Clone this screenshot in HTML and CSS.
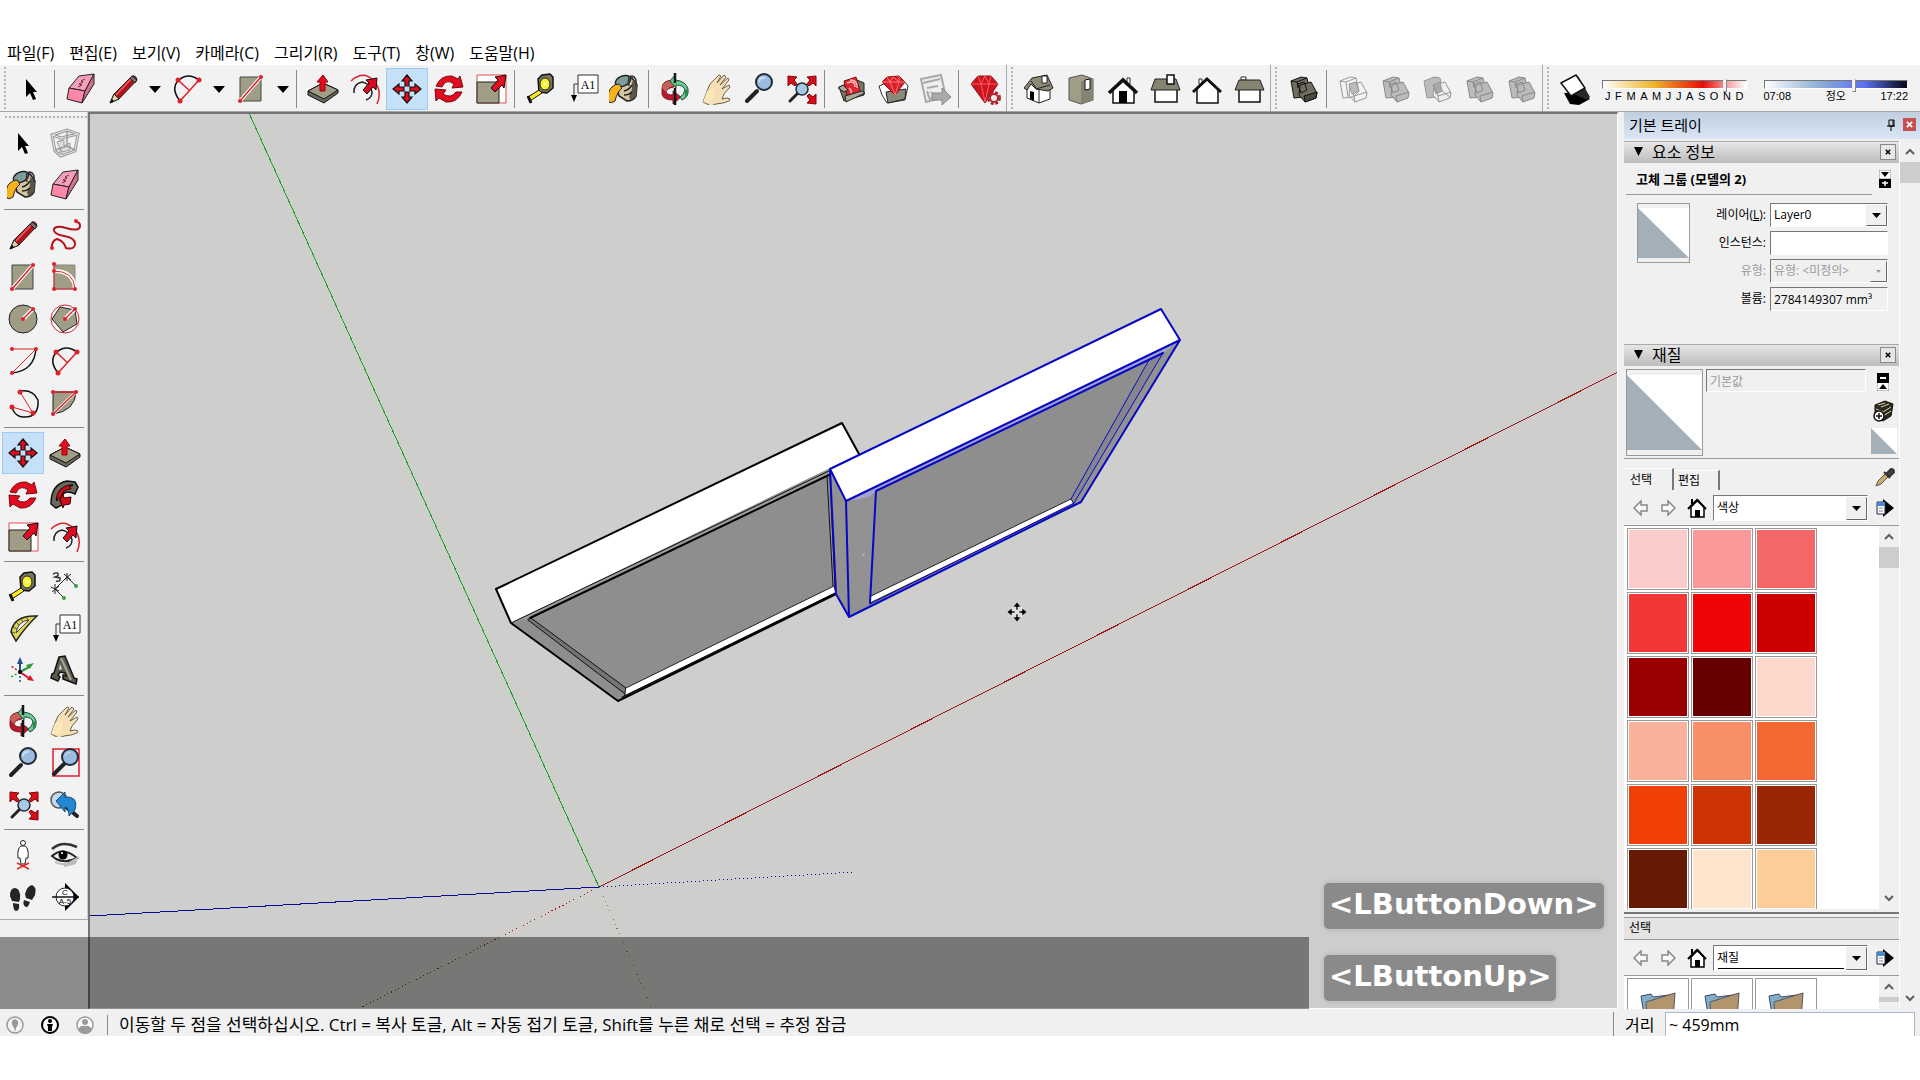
FILE: index.html
```html
<!DOCTYPE html>
<html lang="ko">
  <head>
    <meta charset="utf-8" />
    <meta name="viewport" content="width=device-width, initial-scale=1" />
    <title>SketchUp</title>
    <link rel="stylesheet" href="styles.css">
  </head>

  <body>
    <!-- icon set -->
    <svg class="defs" aria-hidden="true">
      <symbol id="select" viewBox="0 0 32 32"><path d="M11 6v18l4-4 3 7 3-1-3-7h4z"/></symbol>
      <symbol id="component" viewBox="0 0 32 32"><g fill="none" stroke="#999" stroke-width="3"><path d="M3 8l15-5 11 4-3 17-14 5L6 24z"/><path d="M3 8l9 3 17-4M12 11v18"/></g><g fill="none" stroke="#e8e8e8"><path d="M3 8l15-5 11 4-3 17-14 5L6 24z"/><path d="M3 8l9 3 17-4M12 11v18"/></g><path d="M8 15l7-2v6l6-3v7l-8 2z" fill="#ddd" stroke="#999"/><path d="M6 23l12-4 8 4M18 4v15" fill="none" stroke="#999" stroke-width="1.5"/></symbol>
      <symbol id="paint" viewBox="0 0 32 32"><path d="M7 11l3 12 8 5q6 0 9-5l1-11-5-7z" fill="#d3c7a2" stroke="#222" stroke-width="1.5"/><path d="M23 8l5 4-1 11-5 4-2-3 3-8z" fill="#5a564a"/><path d="M15 18q5-1 8-6M15 22q5 0 8-3" fill="none" stroke="#222" stroke-width="1.5"/><ellipse cx="14" cy="8" rx="8" ry="5" transform="rotate(-22 14 8)" fill="#7e9b9d" stroke="#222" stroke-width="1.5"/><path d="M-1 26q0-9 4-12 3-3 7-3l3 4q-5 4-7 13-4 3-6 1z" fill="#f6b21a" stroke="#222"/><path d="M20 13q-2-10 3-10 5 1 4 10" fill="none" stroke="#333" stroke-width="1.5"/></symbol>
      <symbol id="eraser" viewBox="0 0 32 32"><g stroke="#222" stroke-linejoin="round"><path d="M14 3l15-2-9 17-16-3z" fill="#f5a0bb"/><path d="M4 15l16 3-3 12-15-4z" fill="#ff87a7"/><path d="M29 1v10L17 30l3-12z" fill="#d5708f"/></g><path d="M13 14l4-2-3-1 4-2-2-1 4-2" fill="none" stroke="#733"/></symbol>
      <symbol id="pencil" viewBox="0 0 32 32"><path d="M3 30l4-9L25 3q4-1 5 4L12 26z" fill="#b5131c" stroke="#222"/><path d="M3 30l4-9 5 5z" fill="#dfd1ae" stroke="#222"/><path d="M3 30l2-4 2 2z"/><path d="M9 22L25 5" stroke="#e76461" stroke-width="1.5"/><path d="M23 5l5 5 2-3-5-4z" fill="#777" stroke="#222"/></symbol>
      <symbol id="freehand" viewBox="0 0 32 32"><path d="M3 30q-1-8 5-10 7 2 9 9 7 2 9-3 1-7-11-9-11-2-10-7 2-4 12-1 14 4 14-2 0-4-4-4" fill="none" stroke="#b5131c" stroke-width="2"/><g fill="#e11e2c"><circle cx="3" cy="29" r="2"/><circle cx="27" cy="2" r="2"/></g></symbol>
      <symbol id="rect" viewBox="0 0 32 32"><path d="M5 4h21v24H5z" fill="#a09d87" stroke="#444"/><path d="M5 28L26 4" stroke="#fff" stroke-width="3.5"/><path d="M5 28L26 4" stroke="#d9222c" stroke-width="1.5"/><g fill="#d9222c"><circle cx="5" cy="28" r="2"/><circle cx="26" cy="4" r="2"/></g></symbol>
      <symbol id="rotrect" viewBox="0 0 32 32"><path d="M5 4h21v24H5z" fill="#a09d87" stroke="#888"/><path d="M5 10q20 0 21 18" fill="none" stroke="#fff" stroke-width="4"/><path d="M5 3v25h21Q25 10 5 10" fill="none" stroke="#d9222c"/><g fill="#d9222c"><circle cx="5" cy="3" r="2"/><circle cx="5" cy="10" r="2"/><circle cx="5" cy="28" r="2"/><circle cx="26" cy="28" r="2"/></g></symbol>
      <symbol id="circle" viewBox="0 0 32 32"><circle cx="16" cy="16" r="14" fill="#a09d87" stroke="#222"/><path d="M16 16l10-10" stroke="#fff" stroke-width="4"/><path d="M16 16l10-10" stroke="#d9222c" stroke-width="1.5"/><g fill="#d9222c"><circle cx="16" cy="16" r="2"/><circle cx="26" cy="6" r="2"/></g></symbol>
      <symbol id="polygon" viewBox="0 0 32 32"><circle cx="16" cy="16" r="14" fill="#fff" stroke="#d9222c"/><path d="M3 16l8-12 15 3 2 14-14 8z" fill="#a09d87" stroke="#222"/><path d="M16 16l10-10" stroke="#fff" stroke-width="4"/><path d="M16 16l10-10" stroke="#d9222c" stroke-width="1.5"/><g fill="#d9222c"><circle cx="16" cy="16" r="2"/><circle cx="26" cy="6" r="2"/></g></symbol>
      <symbol id="arc" viewBox="0 0 32 32"><path d="M29 4Q27 26 5 28" fill="none" stroke="#111" stroke-width="1.5"/><path d="M5 4h24L5 28" fill="none" stroke="#d9222c"/><g fill="#d9222c"><circle cx="5" cy="4" r="2"/><circle cx="29" cy="4" r="2"/><circle cx="5" cy="28" r="2"/></g></symbol>
      <symbol id="arc2" viewBox="0 0 32 32"><path d="M9 28Q-1 15 8 7q9-8 20 0" fill="none" stroke="#111" stroke-width="1.5"/><path d="M9 28L28 7M7 7l12 11" stroke="#d9222c" stroke-width="1.5"/><g fill="#d9222c"><circle cx="9" cy="28" r="2.5"/><circle cx="28" cy="7" r="2.5"/><circle cx="7" cy="7" r="2.5"/></g></symbol>
      <symbol id="arc3" viewBox="0 0 32 32"><path d="M13 4q13-2 18 9 1 17-13 17-9 1-13-9" fill="none" stroke="#111" stroke-width="1.5"/><path d="M13 5l13 21L5 20" fill="none" stroke="#d9222c"/><g fill="#d9222c"><circle cx="13" cy="5" r="2.5"/><circle cx="26" cy="26" r="2.5"/><circle cx="5" cy="20" r="2.5"/></g></symbol>
      <symbol id="pie" viewBox="0 0 32 32"><path d="M4 5h23q-1 19-23 22z" fill="#a09d87" stroke="#222"/><path d="M4 27L27 5" stroke="#fff" stroke-width="3"/><path d="M4 5h23L4 27" fill="none" stroke="#d9222c" stroke-width="1.5"/><g fill="#d9222c"><circle cx="4" cy="5" r="2"/><circle cx="27" cy="5" r="2"/><circle cx="4" cy="27" r="2"/></g></symbol>
      <symbol id="move" viewBox="0 0 32 32"><path d="M16 2l5 6h-3v5h-4V8h-3zM16 30l5-6h-3v-5h-4v5h-3zM2 16l6-5v3h5v4H8v3zM30 16l-6-5v3h-5v4h5v3z" fill="#e30b20" stroke="#111" stroke-width="1.2"/></symbol>
      <symbol id="push" viewBox="0 0 32 32"><path d="M1 18l15-8 15 7v3L17 30 1 22z" fill="#68685d" stroke="#111"/><path d="M1 18l15-8 15 7-14 9z" fill="#a09d87" stroke="#111"/><path d="M16 2l5 7h-3v9h-5V9h-3z" fill="#e30b20" stroke="#900"/></symbol>
      <symbol id="rotate" viewBox="0 0 32 32"><g fill="#e30b20" stroke="#7a0710"><path d="M3 13Q8 2 19 3l6 3 2-3 3 11-11 1 2-4Q13 5 9 14z"/><path d="M29 19q-5 11-16 10l-7-4-3 3-1-12 11 1-3 4q8 5 13-2z"/></g></symbol>
      <symbol id="follow" viewBox="0 0 32 32"><path d="M2 25Q2 5 18 2l8 1 3 5-3 7q-12-6-15 6l2 5-6 3z" fill="#6b695e" stroke="#111" stroke-width="1.5"/><path d="M8 22Q8 8 24 6" fill="none" stroke="#111" stroke-width="2"/><path d="M7 20Q9 9 20 6l2 4q-9 0-10 8z" fill="#d50d1a" stroke="#400"/><path d="M11 20l3-5 1 4 7-1-1 7-6 1-1 3z" fill="#d50d1a" stroke="#400"/></symbol>
      <symbol id="scale" viewBox="0 0 32 32"><path d="M2 2h29v28H2z" fill="#fff" stroke="#df4c50"/><path d="M2 9h22v21H2z" fill="#a09d87" stroke="#222"/><path d="M31 2L20 4l3 3-7 8 4 4 7-7 2 3z" fill="#e30b20" stroke="#111"/></symbol>
      <symbol id="offset" viewBox="0 0 32 32"><path d="M2 8Q14-3 24 7t4 24" fill="none" stroke="#d9222c" stroke-width="1.5"/><path d="M5 20q-1-9 8-11 9 2 10 10 0 6-6 8" fill="none" stroke="#222" stroke-width="1.5"/><path d="M28 5L17 7l3 3-6 7 4 4 6-7 3 3z" fill="#d90b20" stroke="#111"/></symbol>
      <symbol id="tape" viewBox="0 0 32 32"><path d="M13 6l4-4 8-1 3 3v11l-6 5-8-1z" fill="#77745f" stroke="#111" stroke-width="1.5"/><ellipse cx="20" cy="11" rx="5" ry="6" fill="#f8f32a" stroke="#222"/><path d="M14 17L3 24l2 4 12-8z" fill="#f8e91c" stroke="#111"/><path d="M3 23l3 7" stroke="#111" stroke-width="3"/><circle cx="20" cy="11" r="2" fill="#fbf9a0"/></symbol>
      <symbol id="text" viewBox="0 0 32 32"><path d="M11 2h20v18H11z" fill="#fff" stroke="#333"/><path d="M11 11H7v13" fill="none" stroke="#333"/><path d="M4 22h6l-3 7z"/><text x="21" y="16" class="icon-text">A1</text></symbol>
      <symbol id="dimension" viewBox="0 0 32 32"><path d="M6 18L18 6l9 9M6 18l9 9" fill="none" stroke="#333"/><path d="M2 16l8 4M10 15l-7 6M6 13v10M15 3l7 6M22 3l-7 6M18 2v8" stroke="#222"/><circle cx="27" cy="15" r="2" fill="#39a047"/><circle cx="15" cy="27" r="2" fill="#39a047"/><path d="M4 3q6-3 5 2l-3 1 5 1q1 4-4 3" fill="none" stroke="#333" stroke-width="1.5"/></symbol>
      <symbol id="protractor" viewBox="0 0 32 32"><path d="M30 3Q7 2 4 19l5 9Q20 12 30 3z" fill="#ded451" stroke="#222" stroke-width="1.5"/><path d="M22 7Q11 8 9 20q6-6 13-13z" fill="#f1f1f1" stroke="#444"/><path d="M20 5l1 2M14 6l2 3M9 9l3 3M6 14l4 2M5 19l3 1" stroke="#555"/></symbol>
      <symbol id="axes" viewBox="0 0 32 32"><path d="M13 17V8" stroke="#204f9c" stroke-width="2"/><path d="M10 9l3-7 3 7z" fill="#204f9c"/><path d="M13 17l11-6" stroke="#2b9b3d" stroke-width="2"/><path d="M19 10l8-2-5 6z" fill="#2b9b3d"/><path d="M13 17l10 7" stroke="#d31320" stroke-width="2"/><path d="M20 25l7 1-4-6z" fill="#d31320"/><path d="M13 17v10" stroke="#204f9c" stroke-width="1.5" stroke-dasharray="2"/><path d="M13 17l-9 5" stroke="#2b9b3d" stroke-width="1.5" stroke-dasharray="2"/><path d="M13 17l-9-6" stroke="#d31320" stroke-width="1.5" stroke-dasharray="2"/><circle cx="13" cy="17" r="2"/></symbol>
      <symbol id="text3d" viewBox="0 0 32 32"><path d="M10 2l6-1 9 22 3 1-1 5-13-5v-4l3 1-1-3-5-1-2 3 2 2-2 4-7-3 1-4 2-1z" fill="#5d5b50" stroke="#111" stroke-width="1.5"/><path d="M11 9l2 5-3 1z" fill="#ddd"/><path d="M12 3l10 22" stroke="#aaa591" stroke-width="2"/></symbol>
      <symbol id="orbit" viewBox="0 0 32 32"><path d="M15 7Q3 7 3 15v6q1 6 11 6v4l8-7-8-6v4q-6 0-7-3 1-4 8-5z" fill="#bd1830" stroke="#511" stroke-width=".8"/><path d="M15 7Q3 8 3 15l4 4q1-5 8-6z" fill="#c8615a"/><path d="M16 7V2l-5 6 6 7v-3q8 0 9 5-1 5-5 7l2 3q7-3 6-11-2-8-13-9z" fill="#70c895" stroke="#164f30"/><path d="M26 17v8q4-2 3-9z" fill="#268a51"/><path d="M16 0v32" stroke="#151515" stroke-width="2.5" stroke-dasharray="10 5 20"/></symbol>
      <symbol id="hand" viewBox="0 0 32 32"><path d="M2 29l4-11 3-7 9-9 2 1-4 7 7-8 2 2-6 8 8-7 1 2-7 9 7-4 1 2-6 7-2 5 5-1 3 1-1 2-6 2-7 1-5 2z" fill="#f6dfb5" stroke="#473f31" stroke-width=".8"/><path d="M2 29l4-11 8-2-1 7-4 7z" fill="#fae8ba"/></symbol>
      <symbol id="zoom" viewBox="0 0 32 32"><path d="M14 18L4 28" stroke="#222" stroke-width="4" stroke-linecap="round"/><circle cx="21" cy="9" r="8" fill="#99bce0" stroke="#222a35" stroke-width="2"/><path d="M16 9q1-5 6-4" stroke="#c8e3f7" fill="none" stroke-width="2"/></symbol>
      <symbol id="zoomwin" viewBox="0 0 32 32"><path d="M4 2h26v27H4z" fill="none" stroke="#e11e2c" stroke-width="1.5"/><path d="M15 17L5 27" stroke="#222" stroke-width="4" stroke-linecap="round"/><circle cx="21" cy="10" r="8" fill="#99bce0" stroke="#222a35" stroke-width="2"/><path d="M16 9q1-4 6-4" stroke="#c8e3f7" fill="none"/></symbol>
      <symbol id="extents" viewBox="0 0 32 32"><path d="M13 20L5 28" stroke="#222" stroke-width="3" stroke-linecap="round"/><circle cx="17" cy="16" r="6" fill="#a6c8e4" stroke="#222a35" stroke-width="1.5"/><path d="M3 3l9 1-3 3 3 4-2 2-4-3-3 3zM31 3l-9 1 3 3-3 4 2 2 4-3 3 3zM31 31l-9-1 3-3-3-4 2-2 4 3 3-3z" fill="#d60f20" stroke="#800"/></symbol>
      <symbol id="previous" viewBox="0 0 32 32"><circle cx="10" cy="11" r="8" fill="#c5d9eb" stroke="#555" stroke-width="1.5"/><path d="M17 18l11 9" stroke="#222" stroke-width="4" stroke-linecap="round"/><path d="M7 12l9-9v5q14-1 10 13l-6 6q0-9-4-9v5z" fill="#2487d2" stroke="#135181"/></symbol>
      <symbol id="position" viewBox="0 0 32 32"><path d="M14 7q-4 2-3 12h2l1 6h4l1-6h2Q22 9 18 7z" fill="#fff" stroke="#222"/><circle cx="16" cy="4" r="2.5" fill="#fff" stroke="#222"/><path d="M10 24l12 6M22 24l-12 6" stroke="#e12628" stroke-width="1.5"/></symbol>
      <symbol id="look" viewBox="0 0 32 32"><path d="M3 10Q13 1 28 8" fill="none" stroke="#333" stroke-width="2.5"/><path d="M3 17q11-10 25 2-11 6-21 1z" fill="#eee" stroke="#222" stroke-width="2"/><circle cx="14" cy="16" r="4.5"/><circle cx="13" cy="14" r="1" fill="#fff"/><path d="M6 23q9 5 22-1M15 27l12-3M18 25l12-7" fill="none" stroke="#bbb" stroke-width="2"/></symbol>
      <symbol id="walk" viewBox="0 0 32 32"><path d="M3 15q0-8 5-8 6 1 5 11l-1 3-7-1zM6 22l6 1q1 7-3 7-3-1-3-8zM18 13q2-8 7-9 5 2 3 10l-3 5-6-2zM17 19l6 2q-2 6-4 5-4-2-2-7z" fill="#242424"/></symbol>
      <symbol id="section" viewBox="0 0 32 32"><path d="M16 2l14 14-14 14z"/><circle cx="16" cy="16" r="9" fill="#fff" stroke="#222"/><path d="M3 16h27" stroke="#111" stroke-width="1.5"/><text x="16" y="14" class="icon-small">C</text><text x="16" y="23" class="icon-small">A-5</text></symbol>
      <symbol id="get" viewBox="0 0 32 32"><path d="M4 14l5 14 20-6V10l-7-3-13 5z" fill="#77766a" stroke="#222"/><path d="M9 8l12-4 5 17-14 3z" fill="#dd2630" stroke="#711"/><path d="M12 10q8-3 8 4M14 15q3 2 2 5M15 7q8 0 7 8" fill="none" stroke="#fbb" stroke-width="1.5"/><path d="M3 15l6 4 4-2-5-5zM10 23l17-5 3 2-19 9z" fill="#aaa796" stroke="#222"/></symbol>
      <symbol id="share" viewBox="0 0 32 32"><path d="M2 13l7-3 17-3 5 6-3 14-18 3-5-8z" fill="#fff" stroke="#333"/><path d="M9 19l20-3-1 10-17 4z" fill="#8b897c" stroke="#222"/><path d="M5 9l5-5 12-1 6 6-10 13z" fill="#d8202c" stroke="#911"/><path d="M5 9h23M10 4l3 5 5 13 4-13V3M13 9l3-5 6 5" fill="none" stroke="#ff7774"/></symbol>
      <symbol id="send" viewBox="0 0 32 32"><path d="M2 6l20-4 5 22-20 5z" fill="#eee" stroke="#aaa" stroke-width="2"/><path d="M4 10l17-4M8 15l11-2M8 18l3 9" stroke="#aaa" stroke-width="2"/><circle cx="12" cy="22" r="3" fill="none" stroke="#aaa"/><path d="M13 20h10v-5l9 9-9 8v-5H13z" fill="#aaa" stroke="#888"/></symbol>
      <symbol id="gem" viewBox="0 0 32 32"><path d="M2 11l7-8h13l7 8-13 19z" fill="#cb1420" stroke="#8c1017"/><path d="M2 11h27M9 3l3 8 4 18 4-18 2-8M12 11l4-8 4 8" fill="none" stroke="#ff5b5c"/><circle cx="25" cy="25" r="5" fill="none" stroke="#a82128" stroke-width="4" stroke-dasharray="2.5 1.5"/><circle cx="25" cy="25" r="4" fill="#eee" stroke="#b82630" stroke-width="2"/></symbol>
      <symbol id="iso" viewBox="0 0 32 32"><path d="M4 15l8-9 15 7v13l-11 4-12-5z" fill="#fff" stroke="#222"/><path d="M16 16v14" stroke="#222"/><path d="M1 15L9 5l15-3 6 13-5 3-12-2-5-5-4 6z" fill="#8c8977" stroke="#222"/><path d="M13 15L8 8M13 16l14-4" stroke="#222"/><path d="M19 3h5v7h-5z" fill="#fff" stroke="#222"/><path d="M7 18l4 1v9l-4-2z"/></symbol>
      <symbol id="top" viewBox="0 0 32 32"><path d="M4 5l13-3 11 4v21l-12 4-12-4z" fill="#a09d87" stroke="#555"/><path d="M16 8v23l12-4V6z" fill="#858371"/><path d="M20 7l5-1v10l-5 1z" fill="#fff" stroke="#111"/></symbol>
      <symbol id="front" viewBox="0 0 32 32"><path d="M6 16v14h21V16L16 7z" fill="#fff" stroke="#111" stroke-width="1.5"/><path d="M20 5h3v6h-3z" fill="#fff" stroke="#333"/><path d="M2 20L16 7l14 13" fill="none" stroke="#111" stroke-width="3.5"/><path d="M12 18h8v12h-8z"/></symbol>
      <symbol id="right" viewBox="0 0 32 32"><path d="M6 16h22v13H6z" fill="#fff" stroke="#111" stroke-width="1.5"/><path d="M6 6h21l4 11H2z" fill="#858371" stroke="#222"/><path d="M18 2h7v9h-7z" fill="#fff" stroke="#111" stroke-width="1.5"/></symbol>
      <symbol id="back" viewBox="0 0 32 32"><path d="M6 16v14h21V16L16 6z" fill="#fff" stroke="#111" stroke-width="1.5"/><path d="M8 6h3v5H8z" fill="#fff" stroke="#333"/><path d="M2 19L16 6l14 13" fill="none" stroke="#111" stroke-width="3"/></symbol>
      <symbol id="left" viewBox="0 0 32 32"><path d="M8 4h5v3H8z" fill="#fff" stroke="#333"/><path d="M6 16h21v13H6z" fill="#fff" stroke="#111" stroke-width="1.5"/><path d="M6 7h21l4 10H2z" fill="#858371" stroke="#222"/></symbol>
      <symbol id="solid" viewBox="0 0 32 32"><g stroke="#111" stroke-linejoin="round"><path d="M4 8l10-4 6 1 3 13-6 6-10 1z" fill="#716e61"/><path d="M13 12l11-3 6 11-1 5-11 4-6-7z" fill="#716e61"/><path d="M18 29l-1-6 13-4-1 6z" fill="#4b4940"/><path d="M4 8l6 1 10-4M10 9l1 6M11 11l6-2 3 8-6 3z" fill="none"/></g></symbol>
      <symbol id="solid-grey" viewBox="0 0 32 32"><g stroke="#888" stroke-linejoin="round"><path d="M4 8l10-4 6 1 3 13-6 6-10 1z" fill="#bbb"/><path d="M13 12l11-3 6 11-1 5-11 4-6-7z" fill="#bbb"/><path d="M18 29l-1-6 13-4M4 8l6 1 10-4M10 9l1 6M11 11l6-2 3 8-6 3z" fill="none"/></g></symbol>
      <symbol id="intersect" viewBox="0 0 32 32"><g fill="none" stroke="#999"><path d="M3 8l10-4 6 1 3 13-6 6-10 1zM13 12l11-3 6 11-1 5-11 4-6-7z"/><path d="M3 8l6 1 10-4M9 9l2 15M18 29l-1-6 13-4M13 12l4 11"/><path d="M12 11l7-2 3 9-7 3z" fill="#bbb"/></g></symbol>
      <symbol id="subtract" viewBox="0 0 32 32"><g stroke="#999"><path d="M3 8l10-4 6 1 3 13-6 6-10 1z" fill="#bbb"/><path d="M13 12l11-3 6 11-1 5-11 4-6-7z" fill="#eee"/><path d="M12 12l7-3 2 9-6 3z" fill="#aaa"/><path d="M18 29l-1-6 13-4M13 12l4 11M21 18l8 6" fill="none"/></g></symbol>
      <symbol id="shadow" viewBox="0 0 32 32"><path d="M5 20L20 19l11 7-11 6-9-1z"/><path d="M3 10L19 3l12 21-3 3-15-7z" fill="#292929"/><path d="M2 10L17 2l9 13-14 8z" fill="#fff" stroke="#111" stroke-width="1.5"/></symbol>
      <symbol id="home" viewBox="0 0 20 20"><path d="M4 9v10h13V9l-6-7z" fill="#fff" stroke="#000" stroke-width="1.5"/><path d="M1 11l9-9 9 9M5 6V1" fill="none" stroke="#000" stroke-width="2"/><path d="M8 12h5v7H8z"/></symbol>
      <symbol id="details" viewBox="0 0 18 18"><path d="M7 4V0l11 9-11 9v-4z"/><path d="M1 3h8v12H1z" fill="#fff" stroke="#224"/><path d="M1 3h8v4H1z" fill="#4788c8"/><path d="M3 9h4M3 12h4" stroke="#789"/></symbol>
      <symbol id="arrow" viewBox="0 0 16 16"><path d="M1 8l7-7v4h6v6H8v4z" fill="#f8f8f8" stroke="#888" stroke-width="1.5"/></symbol>
      <symbol id="down" viewBox="0 0 12 8" preserveAspectRatio="none"><path d="M0 0h12L6 8z" fill="currentColor"/></symbol>
      <symbol id="chev" viewBox="0 0 12 8"><path d="M2 6l4-4 4 4" fill="none" stroke="#606060" stroke-width="2"/></symbol>
      <symbol id="close" viewBox="0 0 8 8"><path d="M1 1l6 6M7 1L1 7" stroke="currentColor" stroke-width="2"/></symbol>
      <symbol id="default" viewBox="0 0 50 50" preserveAspectRatio="none"><path d="M0 0h50v50H0z" fill="#fff"/><path d="M0 0l50 50H0z" fill="#a4b0b9"/></symbol>
      <symbol id="folder" viewBox="0 0 38 30"><path d="M2 5l10-2 2 3 16-2-2 26H6z" fill="#81aecb" stroke="#446"/><path d="M7 11l29-9-2 28H8z" fill="#b2956e" stroke="#555"/></symbol>
    </svg>

    <nav class="menu">
      <button>파일(F)</button>
      <button>편집(E)</button>
      <button>보기(V)</button>
      <button>카메라(C)</button>
      <button>그리기(R)</button>
      <button>도구(T)</button>
      <button>창(W)</button>
      <button>도움말(H)</button>
    </nav>

    <header class="toolbar">
      <div class="group">
        <button class="tool" aria-label="선택"><svg><use href="#select"/></svg></button>
        <i class="sep"></i>
        <button class="tool" aria-label="지우개"><svg><use href="#eraser"/></svg></button>
        <button class="tool" aria-label="선"><svg><use href="#pencil"/></svg></button>
        <button class="drop" aria-label="선 도구"><svg><use href="#down"/></svg></button>
        <button class="tool" aria-label="호"><svg><use href="#arc2"/></svg></button>
        <button class="drop" aria-label="호 도구"><svg><use href="#down"/></svg></button>
        <button class="tool" aria-label="직사각형"><svg><use href="#rect"/></svg></button>
        <button class="drop" aria-label="도형 도구"><svg><use href="#down"/></svg></button>
        <i class="sep"></i>
        <button class="tool" aria-label="밀기/당기기"><svg><use href="#push"/></svg></button>
        <button class="tool" aria-label="오프셋"><svg><use href="#offset"/></svg></button>
        <button class="tool active" aria-label="이동"><svg><use href="#move"/></svg></button>
        <button class="tool" aria-label="회전"><svg><use href="#rotate"/></svg></button>
        <button class="tool" aria-label="배율"><svg><use href="#scale"/></svg></button>
        <i class="sep"></i>
        <button class="tool" aria-label="줄자"><svg><use href="#tape"/></svg></button>
        <button class="tool" aria-label="텍스트"><svg><use href="#text"/></svg></button>
        <button class="tool" aria-label="페인트통"><svg><use href="#paint"/></svg></button>
        <i class="sep"></i>
        <button class="tool" aria-label="궤도"><svg><use href="#orbit"/></svg></button>
        <button class="tool" aria-label="이동 보기"><svg><use href="#hand"/></svg></button>
        <button class="tool" aria-label="확대/축소"><svg><use href="#zoom"/></svg></button>
        <button class="tool" aria-label="범위 확대"><svg><use href="#extents"/></svg></button>
        <i class="sep"></i>
        <button class="tool" aria-label="모델 가져오기"><svg><use href="#get"/></svg></button>
        <button class="tool" aria-label="모델 공유"><svg><use href="#share"/></svg></button>
        <button class="tool" aria-label="보내기"><svg><use href="#send"/></svg></button>
        <i class="sep"></i>
        <button class="tool" aria-label="확장 프로그램"><svg><use href="#gem"/></svg></button>
      </div>
      <div class="group">
        <button class="tool" aria-label="등각투영"><svg><use href="#iso"/></svg></button>
        <button class="tool" aria-label="맨 위"><svg><use href="#top"/></svg></button>
        <button class="tool" aria-label="전면"><svg><use href="#front"/></svg></button>
        <button class="tool" aria-label="오른쪽"><svg><use href="#right"/></svg></button>
        <button class="tool" aria-label="후면"><svg><use href="#back"/></svg></button>
        <button class="tool" aria-label="왼쪽"><svg><use href="#left"/></svg></button>
      </div>
      <div class="group">
        <button class="tool" aria-label="외부 쉘"><svg><use href="#solid"/></svg></button>
        <i class="sep"></i>
        <button class="tool" aria-label="교차" disabled><svg><use href="#intersect"/></svg></button>
        <button class="tool" aria-label="결합" disabled><svg><use href="#solid-grey"/></svg></button>
        <button class="tool" aria-label="빼기" disabled><svg><use href="#subtract"/></svg></button>
        <button class="tool" aria-label="트림" disabled><svg><use href="#solid-grey"/></svg></button>
        <button class="tool" aria-label="분할" disabled><svg><use href="#solid-grey"/></svg></button>
      </div>
      <div class="group shadows">
        <button class="tool" aria-label="그림자"><svg><use href="#shadow"/></svg></button>
        <div class="slider">
          <input type="range" class="date" aria-label="날짜" min="0" max="100" value="87">
          <div class="ticks"><span>J</span><span>F</span><span>M</span><span>A</span><span>M</span><span>J</span><span>J</span><span>A</span><span>S</span><span>O</span><span>N</span><span>D</span></div>
        </div>
        <div class="slider">
          <input type="range" class="time" aria-label="시간" min="0" max="100" value="63">
          <div class="ticks hours"><span>07:08</span><span>정오</span><span>17:22</span></div>
        </div>
      </div>
    </header>

    <main>
      <aside class="tools">
        <div class="tools-grid">
          <button class="tool" aria-label="선택"><svg><use href="#select"/></svg></button>
          <button class="tool" aria-label="구성요소 만들기"><svg><use href="#component"/></svg></button>
          <button class="tool" aria-label="페인트통"><svg><use href="#paint"/></svg></button>
          <button class="tool" aria-label="지우개"><svg><use href="#eraser"/></svg></button>
          <hr>
          <button class="tool" aria-label="선"><svg><use href="#pencil"/></svg></button>
          <button class="tool" aria-label="프리핸드"><svg><use href="#freehand"/></svg></button>
          <button class="tool" aria-label="직사각형"><svg><use href="#rect"/></svg></button>
          <button class="tool" aria-label="회전 직사각형"><svg><use href="#rotrect"/></svg></button>
          <button class="tool" aria-label="원"><svg><use href="#circle"/></svg></button>
          <button class="tool" aria-label="다각형"><svg><use href="#polygon"/></svg></button>
          <button class="tool" aria-label="호"><svg><use href="#arc"/></svg></button>
          <button class="tool" aria-label="2점 호"><svg><use href="#arc2"/></svg></button>
          <button class="tool" aria-label="3점 호"><svg><use href="#arc3"/></svg></button>
          <button class="tool" aria-label="파이"><svg><use href="#pie"/></svg></button>
          <hr>
          <button class="tool active" aria-label="이동"><svg><use href="#move"/></svg></button>
          <button class="tool" aria-label="밀기/당기기"><svg><use href="#push"/></svg></button>
          <button class="tool" aria-label="회전"><svg><use href="#rotate"/></svg></button>
          <button class="tool" aria-label="따라가기"><svg><use href="#follow"/></svg></button>
          <button class="tool" aria-label="배율"><svg><use href="#scale"/></svg></button>
          <button class="tool" aria-label="오프셋"><svg><use href="#offset"/></svg></button>
          <hr>
          <button class="tool" aria-label="줄자"><svg><use href="#tape"/></svg></button>
          <button class="tool" aria-label="치수"><svg><use href="#dimension"/></svg></button>
          <button class="tool" aria-label="각도기"><svg><use href="#protractor"/></svg></button>
          <button class="tool" aria-label="텍스트"><svg><use href="#text"/></svg></button>
          <button class="tool" aria-label="축"><svg><use href="#axes"/></svg></button>
          <button class="tool" aria-label="3D 텍스트"><svg><use href="#text3d"/></svg></button>
          <hr>
          <button class="tool" aria-label="궤도"><svg><use href="#orbit"/></svg></button>
          <button class="tool" aria-label="이동 보기"><svg><use href="#hand"/></svg></button>
          <button class="tool" aria-label="확대/축소"><svg><use href="#zoom"/></svg></button>
          <button class="tool" aria-label="창 확대"><svg><use href="#zoomwin"/></svg></button>
          <button class="tool" aria-label="범위 확대"><svg><use href="#extents"/></svg></button>
          <button class="tool" aria-label="이전"><svg><use href="#previous"/></svg></button>
          <hr>
          <button class="tool" aria-label="카메라 배치"><svg><use href="#position"/></svg></button>
          <button class="tool" aria-label="둘러보기"><svg><use href="#look"/></svg></button>
          <button class="tool" aria-label="워크"><svg><use href="#walk"/></svg></button>
          <button class="tool" aria-label="단면"><svg><use href="#section"/></svg></button>
        </div>
      </aside>

      <section class="viewport">
        <svg class="scene" viewBox="90 114 1527 894" preserveAspectRatio="xMinYMin slice">
          <!-- axes -->
          <g fill="none" shape-rendering="crispEdges">
            <path d="M249 113L599 887" stroke="#1f9f24"/>
            <path d="M599 887L652 1009" stroke="#4b9c4b" stroke-dasharray="1 4"/>
            <path d="M599 887L1618 372" stroke="#9c1418"/>
            <path d="M599 887L358 1009" stroke="#9c1418" stroke-dasharray="1 3"/>
            <path d="M599 887L90 916" stroke="#0a0a96"/>
            <path d="M599 887L855 872" stroke="#0a0a96" stroke-dasharray="1 3"/>
          </g>
          <!-- left cabinet -->
          <g stroke-linejoin="round" stroke-linecap="round">
            <path d="M496 589L842 423l17 31-29 16 6 124-218 107-107-78z" fill="#8e8e8e"/>
            <path d="M496 589L842 423l17 31-348 169z" fill="#fff"/>
            <path d="M511 623L830 470v5L530 618z" fill="#9c9c9c"/>
            <path d="M531 618l95 70-1 6-97-74z" fill="#747474" stroke="#111"/>
            <path d="M626 688l208-102 2 7-211 103z" fill="#fff" stroke="#222"/>
            <path d="M511 623L831 470M827 476l6 110M830 476l5 110" fill="none" stroke="#111"/>
            <path d="M530 618L831 474M859 454l-17-31L496 589l15 34 107 78 218-107" fill="none" stroke="#000" stroke-width="2"/>
            <path d="M622 697l213-104" stroke="#000"/>
          </g>
          <!-- selected cabinet -->
          <g stroke-linejoin="round" stroke-linecap="round">
            <path d="M830 469l16 32 334-161-99 162-232 115-13-23z" fill="#929292"/>
            <path d="M830 469l331-160 19 31-334 161z" fill="#fff"/>
            <path d="M849 501l331-160-17 12-287 138-7 6z" fill="#a3a3d0"/>
            <path d="M876 491l287-138-14 8-78 138-200 97z" fill="#8e8e8e"/>
            <path d="M1149 361l14-9-89 151-3-4z" fill="#85858f"/>
            <path d="M871 596l200-97 3 5-204 99z" fill="#fff" stroke="#222"/>
            <g fill="none" stroke="#0808c4">
              <path d="M1149 360l-78 139M1163 353l-89 150"/>
              <path d="M830 469l331-160 19 31-99 162-232 115-13-23zM846 501l334-161M846 501l3 116M830 469l16 32" stroke-width="2"/>
              <path d="M876 491l-6 112M876 491l287-138" stroke-width="2"/>
              <path d="M870 604l204-101"/>
            </g>
            <path d="M863 555h1" stroke="#ddd"/>
          </g>
          <!-- move cursor -->
          <g transform="translate(1017 612)">
            <circle r="7" fill="#ddd"/>
            <path d="M0-10l4 5H1v3h-2v-3h-3zM0 10l4-5H1V2h-2v3h-3zM-10 0l5-4v3h3v2h-3v3zM10 0L5-4v3H2v2h3v3z" stroke="#eee" stroke-width=".6"/>
          </g>
        </svg>
        <div class="keys">
          <kbd>&lt;LButtonDown&gt;</kbd>
          <kbd>&lt;LButtonUp&gt;</kbd>
        </div>
      </section>

      <aside class="tray">
        <div class="tray-title">
          <span>기본 트레이</span>
          <button class="pin" aria-label="고정"><svg viewBox="0 0 10 12"><path d="M3 1h5v6H3zM1 7h8M5 7v5M7 1v6" fill="none" stroke="#000"/></svg></button>
          <button class="tray-close" aria-label="닫기"><svg><use href="#close"/></svg></button>
        </div>
        <div class="tray-body">
          <div class="panels">
            <h2><svg><use href="#down"/></svg>요소 정보<button aria-label="요소 정보 닫기"><svg><use href="#close"/></svg></button></h2>
            <div class="entity">
              <div class="entity-head">
                <strong>고체 그룹 (모델의 2)</strong>
                <button class="toggle" aria-label="세부 정보"><svg viewBox="0 0 12 18"><path d="M0 0h12v9H0z" fill="#fff" stroke="#888"/><path d="M2 2h8L6 7zM0 9h12v9H0z"/><path d="M6 11v5M3 13h6" stroke="#fff" stroke-width="1.5"/></svg></button>
              </div>
              <div class="entity-body">
                <div class="thumb"><svg><use href="#default"/></svg></div>
                <form class="fields">
                  <label for="layer">레이어(<u>L</u>):</label>
                  <span class="combo"><select id="layer"><option>Layer0</option></select><i><svg><use href="#down"/></svg></i></span>
                  <label for="instance">인스턴스:</label>
                  <input id="instance" value="">
                  <label for="type" class="off">유형:</label>
                  <span class="combo off"><select id="type" disabled><option>유형: &lt;미정의&gt;</option></select><i><svg><use href="#down"/></svg></i></span>
                  <label for="volume">볼륨:</label>
                  <input id="volume" value="2784149307 mm³" readonly>
                </form>
              </div>
            </div>

            <h2><svg><use href="#down"/></svg>재질<button aria-label="재질 닫기"><svg><use href="#close"/></svg></button></h2>
            <div class="material">
              <div class="thumb big"><svg><use href="#default"/></svg></div>
              <input aria-label="재질 이름" value="기본값" disabled>
              <div class="material-side">
                <button class="toggle" aria-label="보조 창"><svg viewBox="0 0 12 18"><path d="M0 9h12v9H0z" fill="#fff" stroke="#888"/><path d="M2 16h8l-4-5zM0 0h12v10H0z"/><path d="M3 5h6" stroke="#fff" stroke-width="2"/></svg></button>
                <button class="create" aria-label="재질 만들기"><svg viewBox="0 0 22 22"><path d="M3 5l10-4 8 3-2 12-8 5-8-5z" fill="#2c2a20" stroke="#111"/><path d="M6 5l7-2M9 7l8-3M4 9l7 3 8-5M4 13l7 3 8-5" stroke="#ddd2aa" fill="none"/><circle cx="7" cy="16" r="5" fill="#fff" stroke="#111" stroke-width="1.5"/><path d="M7 13v6M4 16h6" stroke="#111" stroke-width="1.5"/></svg></button>
                <button class="reset" aria-label="기본 재질"><svg><use href="#default"/></svg></button>
              </div>
            </div>
            <div class="tabs">
              <button class="current">선택</button>
              <button>편집</button>
              <button class="dropper" aria-label="샘플 페인트"><svg viewBox="0 0 20 20"><path d="M1 19l2-5 8-8 3 3-8 8z" fill="#d1aa68" stroke="#555"/><path d="M9 5l6 6M11 7l5-5q3 0 3 3l-5 5z" fill="#444" stroke="#333" stroke-width="2"/></svg></button>
            </div>
            <div class="nav">
              <button aria-label="뒤로"><svg><use href="#arrow"/></svg></button>
              <button aria-label="앞으로" class="flip"><svg><use href="#arrow"/></svg></button>
              <button aria-label="모델 안" class="home"><svg><use href="#home"/></svg></button>
              <span class="combo"><select aria-label="재질 모음"><option>색상</option></select><i><svg><use href="#down"/></svg></i></span>
              <button aria-label="세부 정보" class="details"><svg><use href="#details"/></svg></button>
            </div>
            <div class="list colors">
              <div class="swatches">
                <button aria-label="색상 1"></button><button aria-label="색상 2"></button><button aria-label="색상 3"></button>
                <button aria-label="색상 4"></button><button aria-label="색상 5"></button><button aria-label="색상 6"></button>
                <button aria-label="색상 7"></button><button aria-label="색상 8"></button><button aria-label="색상 9"></button>
                <button aria-label="색상 10"></button><button aria-label="색상 11"></button><button aria-label="색상 12"></button>
                <button aria-label="색상 13"></button><button aria-label="색상 14"></button><button aria-label="색상 15"></button>
                <button aria-label="색상 16"></button><button aria-label="색상 17"></button><button aria-label="색상 18"></button>
              </div>
              <div class="scroll"><svg><use href="#chev"/></svg><i></i><svg class="last"><use href="#chev"/></svg></div>
            </div>
            <div class="split"></div>
            <div class="second-title">선택</div>
            <div class="nav">
              <button aria-label="뒤로"><svg><use href="#arrow"/></svg></button>
              <button aria-label="앞으로" class="flip"><svg><use href="#arrow"/></svg></button>
              <button aria-label="모델 안" class="home"><svg><use href="#home"/></svg></button>
              <span class="combo lined"><select aria-label="보조 재질 모음"><option>재질</option></select><i><svg><use href="#down"/></svg></i></span>
              <button aria-label="세부 정보" class="details"><svg><use href="#details"/></svg></button>
            </div>
            <div class="list folders">
              <div class="swatches">
                <button aria-label="폴더 1"><svg><use href="#folder"/></svg></button>
                <button aria-label="폴더 2"><svg><use href="#folder"/></svg></button>
                <button aria-label="폴더 3"><svg><use href="#folder"/></svg></button>
              </div>
              <div class="scroll"><svg><use href="#chev"/></svg><i></i></div>
            </div>
          </div>
          <div class="scroll outer"><svg><use href="#chev"/></svg><i></i><svg class="last"><use href="#chev"/></svg></div>
        </div>
      </aside>
      <div class="shade"></div>
    </main>

    <footer>
      <svg viewBox="0 0 20 20"><circle cx="10" cy="10" r="8" fill="#f4f4f4" stroke="#999" stroke-width="1.5"/><path d="M10 4q6 2 1 9l-1 4-1-4Q4 6 10 4z" fill="#999"/></svg>
      <svg viewBox="0 0 20 20"><circle cx="10" cy="10" r="8" fill="#fff" stroke="#000" stroke-width="2"/><circle cx="10" cy="6" r="2"/><path d="M7 9h6l-1 3v4H8v-4z"/></svg>
      <svg viewBox="0 0 20 20"><circle cx="10" cy="10" r="8" fill="#fff" stroke="#999" stroke-width="1.5"/><circle cx="10" cy="7" r="3" fill="#999"/><path d="M3 15q2-5 7-4 5-1 7 4-3 4-7 4t-7-4z" fill="#999"/></svg>
      <p>이동할 두 점을 선택하십시오. Ctrl = 복사 토글, Alt = 자동 접기 토글, Shift를 누른 채로 선택 = 추정 잠금</p>
      <div class="measure">
        <label for="distance">거리</label>
        <input id="distance" value="~ 459mm">
      </div>
    </footer>
  </body>
</html>
```
FILE: styles.css
```css
* {
    box-sizing: border-box;
}
body {
    display: flex;
    flex-direction: column;
    height: 100vh;
    margin: 0;
    padding: 40px 0 44px;
    overflow: hidden;
    background: #fff;
    color: #000;
    font: 16px/20px "Open Sans", "Noto Sans CJK KR", sans-serif;
}
button, input, select {
    margin: 0;
    padding: 0;
    border: 0;
    border-radius: 0;
    background: none;
    color: inherit;
    font: inherit;
}
svg {
    display: block;
    flex: none;
}
.defs {
    display: none;
}
.icon-text {
    font: 12px "Liberation Serif", serif;
    text-anchor: middle;
}
.icon-small {
    font: 8px "Liberation Sans", sans-serif;
    text-anchor: middle;
}

/* menu */
.menu {
    display: flex;
    gap: 15px;
    height: 25px;
    padding: 0 7px;
}

/* toolbars */
.toolbar {
    display: flex;
    height: 47px;
    background: #f2f2f2;
    border-bottom: 1px solid #a5a5a5;
}
.group {
    display: flex;
    align-items: center;
    padding: 2px 0 0 11px;
    border-right: 1px solid #aaa;
    background: linear-gradient(#f2f2f2 50%, transparent 50%) 4px 0 / 2px 4px repeat-y, linear-gradient(#b5b5b5, #b5b5b5) 4px 0 / 2px 100% no-repeat;
}
.group:first-child {
    padding-left: 10px;
}
.tool {
    display: flex;
    align-items: center;
    justify-content: center;
    flex: none;
    width: 42px;
    height: 42px;
}
.tool svg {
    width: 32px;
    height: 32px;
}
.active {
    background: #c5e0f7;
    border: 1px solid #9acbf5;
}
.drop {
    width: 22px;
    height: 42px;
    padding: 0 5px;
}
.drop svg {
    width: 12px;
    height: 7px;
}
.sep {
    flex: none;
    width: 1px;
    height: 38px;
    margin: 0 5px 0 2px;
    background: #8a8a8a;
}
.shadows {
    flex: 1;
    padding-right: 12px;
    border-right: 0;
}
.shadows .tool {
    margin-right: 6px;
}
.slider {
    flex: 1;
}
.slider + .slider {
    margin-left: 17px;
}
.slider input {
    display: block;
    appearance: none;
    width: 100%;
    height: 13px;
}
.slider input::-webkit-slider-runnable-track {
    height: 9px;
    border: 1px solid;
    border-color: #777 #fff #fff #777;
}
.date::-webkit-slider-runnable-track {
    background: linear-gradient(90deg, #fff, #efb62b 35%, #e60d08 70%, #f3a1a5 87%, #fff);
}
.time::-webkit-slider-runnable-track {
    background: linear-gradient(90deg, #fff, #8eb0d3 37%, #5b70f0 70%, #070716);
}
.slider input::-webkit-slider-thumb {
    appearance: none;
    width: 4px;
    height: 13px;
    margin-top: -2px;
    background: #f5f5f5;
    border: 1px solid;
    border-color: #eee #888 #888 #eee;
}
.ticks {
    display: flex;
    justify-content: space-between;
    padding: 0 3px;
    font: 11px/10px "Liberation Sans", "Noto Sans CJK KR", sans-serif;
}
.hours {
    padding: 0;
}

/* work area */
main {
    position: relative;
    display: flex;
    flex: 1;
    min-height: 0;
}
.tools {
    width: 88px;
    background: #f0f0f0;
}
.tools-grid {
    display: grid;
    grid-template-columns: 42px 42px;
    padding: 10px 2px 1px;
    border-bottom: 1px solid #aaa;
    border-right: 1px solid #ccc;
    background: linear-gradient(90deg, #f2f2f2 50%, transparent 50%) 3px 4px / 4px 2px repeat-x, linear-gradient(#b5b5b5, #b5b5b5) 3px 4px / 100% 2px no-repeat, #f2f2f2;
}
.tools hr {
    grid-column: 1 / 3;
    width: 80px;
    height: 1px;
    margin: 3px 0 4px 2px;
    border: 0;
    background: #888;
}
.viewport {
    position: relative;
    flex: 1;
    min-width: 0;
    overflow: hidden;
    background: #cececc;
    border: solid;
    border-width: 2px 1px 1px 2px;
    border-color: #747474 #fff #fff #747474;
}
.scene {
    width: 100%;
    height: 100%;
}
.keys {
    position: absolute;
    left: calc(100% - 293px);
    bottom: 7px;
    display: flex;
    flex-direction: column;
    align-items: flex-start;
    gap: 26px;
}
kbd {
    height: 46px;
    padding: 0 5px;
    border-radius: 5px;
    background: #8a8a8a;
    box-shadow: 0 0 4px 2px #bdbdbd;
    color: #fff;
    font: bold 29px/43px "DejaVu Sans", sans-serif;
}
.shade {
    position: absolute;
    left: 0;
    bottom: 0;
    width: 68.2%;
    height: 72px;
    background: rgba(0, 0, 0, .42);
}

/* tray */
.tray {
    display: flex;
    flex-direction: column;
    width: 302px;
    padding-left: 6px;
    background: #f0f0f0;
    font-size: 12px;
    line-height: 16px;
}
.tray-title {
    display: flex;
    align-items: center;
    height: 27px;
    padding: 0 4px 2px 5px;
    background: linear-gradient(#c1cedf, #d9e6f4);
    font-size: 15px;
}
.tray-title span {
    flex: 1;
}
.pin svg {
    width: 10px;
    height: 12px;
}
.tray-close {
    width: 13px;
    height: 13px;
    margin-left: 7px;
    padding: 3px;
    background: #c75050;
    color: #fff;
}
.tray-close svg {
    width: 7px;
    height: 7px;
}
.tray-body {
    display: flex;
    flex: 1;
    min-height: 0;
    padding-top: 2px;
}
.panels {
    display: flex;
    flex-direction: column;
    flex: 1;
    min-width: 0;
}
.panels > * {
    flex: none;
}
h2 {
    display: flex;
    align-items: center;
    gap: 9px;
    height: 22px;
    margin: 0;
    padding: 0 3px 2px 10px;
    border-top: 1px solid #aaa;
    background: linear-gradient(#e6e6e6, #bcbcbc);
    font-size: 16px;
    font-weight: 400;
}
h2 > svg {
    width: 9px;
    height: 9px;
}
h2 button {
    width: 16px;
    height: 16px;
    margin-left: auto;
    padding: 4px;
    border: 1px solid #888;
    background: #e6e6e6;
}
h2 button svg {
    width: 6px;
    height: 6px;
}
.entity {
    height: 181px;
}
.entity-head {
    display: flex;
    align-items: center;
    height: 32px;
    margin-left: 2px;
    padding-left: 10px;
    background: linear-gradient(#999, #999) 0 100% / 246px 1px no-repeat;
    font-size: 13px;
}
.entity-head strong {
    flex: 1;
}
.toggle {
    margin-right: 8px;
}
.toggle svg {
    width: 12px;
    height: 18px;
}
.entity-body {
    display: flex;
    justify-content: space-between;
    padding: 8px 11px 0 13px;
}
.thumb {
    width: 53px;
    height: 60px;
    padding: 4px 0;
    border: 1px solid #999;
}
.thumb svg {
    width: 100%;
    height: 100%;
}
.fields {
    display: grid;
    grid-template-columns: auto 118px;
    grid-auto-rows: 24px;
    align-items: center;
    gap: 4px;
    text-align: right;
}
.fields input, .fields .combo {
    height: 24px;
}
.off {
    color: #999;
}
input, .combo {
    border: 1px solid;
    border-color: #777 #fff #fff #777;
    background: #fff;
}
.slider input {
    border: 0;
    background: none;
}
.fields input, .material input {
    min-width: 0;
    padding-left: 3px;
}
#volume, .material input, .combo.off {
    background: #f0f0f0;
}
.material input {
    flex: 1;
    align-self: flex-start;
    height: 23px;
    color: #999;
}
.combo {
    position: relative;
    display: block;
}
.combo select {
    appearance: none;
    display: block;
    width: 100%;
    height: 100%;
    padding-left: 3px;
    opacity: 1;
}
.combo i {
    position: absolute;
    top: 1px;
    right: 0;
    bottom: 0;
    display: flex;
    align-items: center;
    justify-content: center;
    width: 21px;
    border: 1px solid;
    border-color: #eee #666 #666 #eee;
    background: #f0f0f0;
    pointer-events: none;
}
.combo i svg, .nav .combo svg {
    width: 9px;
    height: 5px;
}
.combo.off i {
    width: 17px;
}
.combo.off i svg {
    width: 5px;
    height: 3px;
}
.material {
    display: flex;
    gap: 3px;
    height: 93px;
    padding: 3px 2px;
    border-bottom: 1px solid #999;
}
.thumb.big {
    width: 77px;
    height: 87px;
    padding: 5px 0;
}
.material-side {
    display: flex;
    flex-direction: column;
    align-items: flex-end;
    width: 28px;
    padding-top: 4px;
}
.create {
    margin: 9px 3px 6px;
}
.create svg {
    width: 22px;
    height: 22px;
}
.reset svg {
    width: 26px;
    height: 26px;
}
.tabs {
    display: flex;
    align-items: flex-end;
    height: 31px;
    padding-right: 4px;
}
.tabs button {
    width: 46px;
    height: 20px;
    padding-right: 14px;
    border-top: 1px solid #fff;
    border-right: 2px solid #777;
}
.tabs .current {
    width: 50px;
    height: 22px;
}
.tabs .dropper {
    width: 20px;
    height: 26px;
    margin-left: auto;
    padding: 0;
    border: 0;
}
.dropper svg {
    width: 20px;
    height: 20px;
}
.nav {
    display: flex;
    align-items: center;
    gap: 11px;
    height: 36px;
    padding: 1px 5px 0 9px;
    border-bottom: 1px solid #999;
}
.nav svg {
    width: 16px;
    height: 16px;
}
.flip svg {
    transform: scaleX(-1);
}
.nav .home svg {
    width: 20px;
    height: 20px;
}
.nav .combo {
    flex: 1;
    height: 26px;
    margin: 0 -3px 0 -5px;
}
.nav .details svg {
    width: 18px;
    height: 18px;
}
.lined select {
    background: linear-gradient(#000, #000) 4px 22px / 126px 1px no-repeat;
}
.list {
    display: flex;
    overflow: hidden;
    background: #fff;
}
.panels .colors {
    flex: 1;
    min-height: 0;
}
.swatches {
    display: grid;
    grid-template-columns: 62px 62px 62px;
    grid-auto-rows: 62px;
    gap: 2px;
    flex: 1;
    padding: 2px 3px;
}
.swatches button {
    padding: 1px;
    border: 1px solid #999;
    background-clip: content-box;
}
.colors button:nth-child(1) { background-color: #fccccc; }
.colors button:nth-child(2) { background-color: #fa9999; }
.colors button:nth-child(3) { background-color: #f56666; }
.colors button:nth-child(4) { background-color: #f33636; }
.colors button:nth-child(5) { background-color: #ee0505; }
.colors button:nth-child(6) { background-color: #cc0000; }
.colors button:nth-child(7) { background-color: #990000; }
.colors button:nth-child(8) { background-color: #660000; }
.colors button:nth-child(9) { background-color: #fdd9cd; }
.colors button:nth-child(10) { background-color: #f9b299; }
.colors button:nth-child(11) { background-color: #f88f66; }
.colors button:nth-child(12) { background-color: #f46833; }
.colors button:nth-child(13) { background-color: #f04005; }
.colors button:nth-child(14) { background-color: #cc3305; }
.colors button:nth-child(15) { background-color: #992605; }
.colors button:nth-child(16) { background-color: #661a03; }
.colors button:nth-child(17) { background-color: #fee6ce; }
.colors button:nth-child(18) { background-color: #fccd99; }
.scroll {
    display: flex;
    flex-direction: column;
    align-items: center;
    flex: none;
    width: 20px;
    padding: 7px 0;
    background: #f0f0f0;
}
.scroll svg {
    width: 12px;
    height: 8px;
}
.scroll i {
    width: 100%;
    height: 21px;
    margin-top: 6px;
    background: #cdcdcd;
}
.scroll .last {
    margin-top: auto;
    transform: scaleY(-1);
}
.outer {
    width: 21px;
    border-left: 1px solid #fff;
}
.split {
    height: 9px;
    border-bottom: 1px solid #999;
    background: linear-gradient(#777, #777) 0 3px / 100% 2px no-repeat;
}
.second-title {
    height: 22px;
    padding: 2px 5px;
    border-bottom: 1px solid #999;
    background: #e4e4e4;
}
.folders {
    height: 33px;
}
.folders button {
    display: flex;
    justify-content: center;
    padding-top: 12px;
}
.folders svg {
    width: 38px;
    height: 30px;
}
.folders .scroll svg {
    width: 12px;
    height: 8px;
}

/* status bar */
footer {
    display: flex;
    align-items: center;
    gap: 15px;
    height: 27px;
    padding: 5px 5px 0;
    overflow: hidden;
    background: #f0f0f0;
}
footer > svg {
    width: 20px;
    height: 20px;
}
footer p {
    flex: 1;
    margin: 0 0 0 -3px;
    padding-left: 11px;
    border-left: 1px solid #888;
    font-size: 17px;
    white-space: nowrap;
}
.measure {
    display: flex;
    align-items: center;
    flex: none;
    width: 302px;
    padding-left: 11px;
    border-left: 1px solid #888;
}
.measure label {
    width: 40px;
}
.measure input {
    flex: 1;
    min-width: 0;
    height: 26px;
    padding-left: 3px;
    border-color: #a9b8c8;
}
```
